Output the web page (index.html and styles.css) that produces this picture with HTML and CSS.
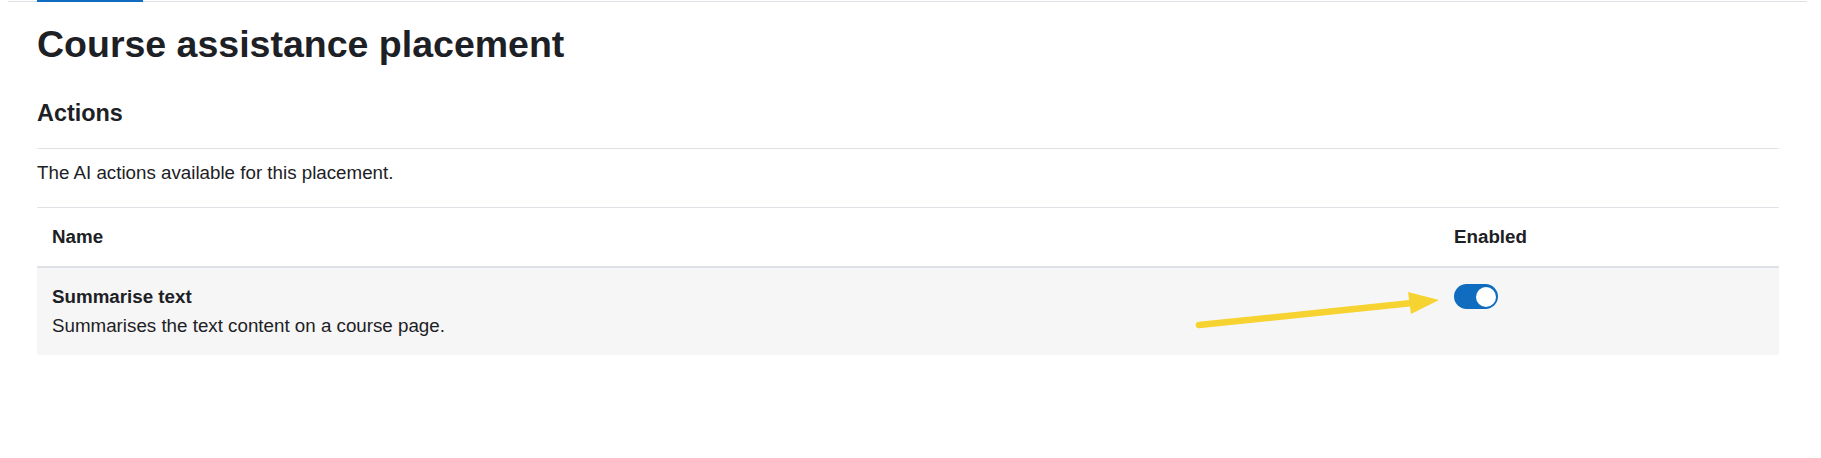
FILE: index.html
```html
<!DOCTYPE html>
<html lang="en">
<head>
    <meta charset="UTF-8">
    <meta name="viewport" content="width=device-width, initial-scale=1.0">
    <title>Course assistance placement</title>
    <link rel="stylesheet" href="styles.css">
</head>
<body>
    <div id="page">
        <div class="tabs">
            <div class="tab-active"></div>
        </div>
        <div class="content">
            <h2 class="page-title">Course assistance placement</h2>
            <h3 class="section-title">Actions</h3>
            <p class="section-desc">The AI actions available for this placement.</p>
            <table class="actions-table">
                <thead>
                    <tr>
                        <th class="col-name">Name</th>
                        <th class="col-enabled">Enabled</th>
                    </tr>
                </thead>
                <tbody>
                    <tr>
                        <td>
                            <div class="action-name">Summarise text</div>
                            <div class="action-desc">Summarises the text content on a course page.</div>
                        </td>
                        <td>
                            <span class="toggle"><span class="knob"></span></span>
                        </td>
                    </tr>
                </tbody>
            </table>
        </div>
    </div>
    <!-- annotation arrow pointing at the toggle -->
    <svg class="arrow" width="1821" height="458" viewBox="0 0 1821 458">
        <line x1="1199" y1="325" x2="1412" y2="303" stroke="#f6d330" stroke-width="6.5" stroke-linecap="round"/>
        <polygon points="1439,300 1408,292 1411,314" fill="#f6d330"/>
    </svg>
</body>
</html>
```

FILE: styles.css
```css
body {
    font-family: "Liberation Sans", Arial, sans-serif;
    font-size: 18.75px;
    line-height: 1.5;
    color: #1d2125;
    background-color: #fff;
    margin: 0;
    padding: 0;
    position: relative;
}

#page {
    margin-left: 8px;
    width: 1799px;
}

.tabs {
    display: flex;
    height: 1px;
    padding-left: 29px;
    border-bottom: 1px solid #dee2e6;
}

.tab-active {
    width: 106px;
    height: 2px;
    background-color: #0f6cbf;
}

.content {
    padding: 0 28px 0 29px;
}

.page-title {
    font-size: 37.5px;
    font-weight: bold;
    line-height: 1.2;
    margin: 20px 0 32px;
}

.section-title {
    font-size: 23.4375px;
    font-weight: bold;
    line-height: 1.2;
    margin: 0 0 21px;
}

.section-desc {
    margin: 0;
    padding: 10px 0 20px;
    border-top: 1px solid #dee2e6;
}

.actions-table {
    width: 100%;
    border-collapse: collapse;
}

.actions-table th {
    text-align: left;
    font-weight: bold;
    padding: 15px;
    border-top: 1px solid #dee2e6;
    border-bottom: 2px solid #dee2e6;
}

.col-enabled {
    width: 310px;
}

.actions-table td {
    vertical-align: top;
    padding: 15px;
    background-color: #f6f6f6;
}

.action-name {
    font-weight: bold;
}

.toggle {
    display: flex;
    justify-content: flex-end;
    align-items: center;
    box-sizing: border-box;
    width: 44px;
    height: 25px;
    margin-top: 1px;
    padding: 0 2px;
    border-radius: 13px;
    background-color: #0f6cbf;
}

.knob {
    width: 20px;
    height: 20px;
    border-radius: 50%;
    background-color: #fff;
}

.arrow {
    position: absolute;
    left: 0;
    top: 0;
    pointer-events: none;
}
```
